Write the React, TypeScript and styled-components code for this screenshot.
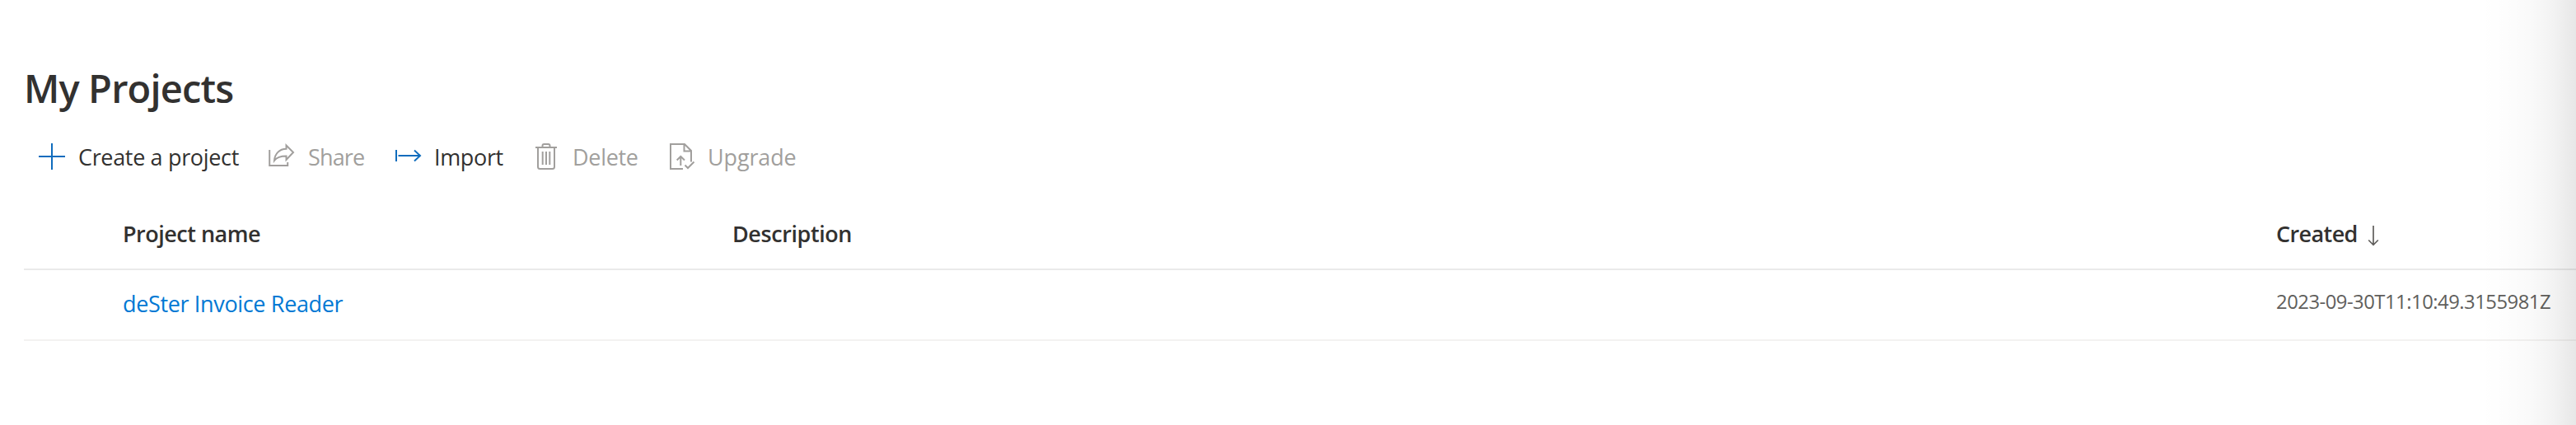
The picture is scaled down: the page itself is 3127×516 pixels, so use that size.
import React from 'react';
import styled, { createGlobalStyle } from 'styled-components';

const GlobalStyle = createGlobalStyle`
  body {
    margin: 0;
    background: #fff;
    font-family: 'Open Sans', 'Noto Sans', sans-serif;
    color: #323130;
  }
`;

const Page = styled.main`
  position: relative;
  box-sizing: border-box;
  height: 516px;
  padding: 75px 0 0 29px;
  overflow: hidden;
`;

const Title = styled.h1`
  margin: 0;
  font-size: 47px;
  font-weight: 600;
  line-height: 64px;
  letter-spacing: -0.85px;
`;

const Toolbar = styled.div`
  display: grid;
  grid-template-columns: 279px 153px 168px 164px 200px;
  height: 60px;
  margin-top: 21px;
  padding-left: 18px;
`;

const Command = styled.button<{ $spacing: number }>`
  display: flex;
  align-items: center;
  gap: 16px;
  padding: 0;
  border: 0;
  background: none;
  font: inherit;
  font-size: 27px;
  letter-spacing: ${(p) => p.$spacing}px;
  white-space: nowrap;
  color: #323130;
  &:disabled {
    color: #a19f9d;
  }
`;

const Icon = styled.svg`
  flex: none;
  width: 32px;
  height: 32px;
  overflow: visible;
  fill: none;
  stroke: #0f6cbd;
  stroke-width: 2;
  ${Command}:disabled & {
    stroke: #a19f9d;
  }
`;

const Row = styled.div<{ $height: number; $line: string }>`
  display: grid;
  grid-template-columns: 740px 1874px 1fr;
  align-items: center;
  box-sizing: border-box;
  height: ${(p) => p.$height}px;
  padding-left: 120px;
  border-bottom: 2px solid ${(p) => p.$line};
  white-space: nowrap;
`;

const HeaderCell = styled.div<{ $spacing: number }>`
  display: flex;
  align-items: center;
  gap: 12px;
  padding-top: 21px;
  font-size: 27px;
  font-weight: 600;
  line-height: 38px;
  letter-spacing: ${(p) => p.$spacing}px;
`;

const SortArrow = styled.svg`
  width: 14px;
  height: 30px;
  fill: none;
  stroke: #605e5c;
  stroke-width: 1.7;
`;

const ProjectLink = styled.a`
  padding-bottom: 3px;
  font-size: 27px;
  line-height: 38px;
  letter-spacing: -0.35px;
  color: #0078d4;
`;

const Created = styled.div`
  padding-bottom: 8px;
  font-size: 23.8px;
  line-height: 34px;
  letter-spacing: -0.48px;
  color: #605e5c;
`;

const EdgeShadow = styled.div`
  position: absolute;
  top: 0;
  right: 0;
  width: 116px;
  height: 100%;
  background: linear-gradient(
    to right,
    transparent,
    rgba(0, 0, 0, 0.006) 25%,
    rgba(0, 0, 0, 0.02) 50%,
    rgba(0, 0, 0, 0.05) 77%,
    rgba(0, 0, 0, 0.093)
  );
  pointer-events: none;
`;

export default function App() {
  return (
    <Page>
      <GlobalStyle />
      <Title>My Projects</Title>
      <Toolbar>
        <Command $spacing={-0.34}>
          <Icon>
            <path d="M16 0V32M0 16H32" />
          </Icon>
          Create a project
        </Command>
        <Command $spacing={-0.85} disabled>
          <Icon>
            <path d="M1.2 8V27H23.2V23" />
            <path d="M21.5 2.5L30 11L21.5 20V15.5C15 15.5 10 17 7 21C7.5 13 13 6.8 21.5 6.8Z" />
          </Icon>
          Share
        </Command>
        <Command $spacing={-0.35}>
          <Icon>
            <path d="M2 8V22M4.5 15H31M24 8.5L31 15L24 21.5" />
          </Icon>
          Import
        </Command>
        <Command $spacing={-0.3} disabled>
          <Icon>
            <path d="M3 5H29M11.5 5V3Q11.5 1 13.5 1H18.5Q20.5 1 20.5 3V5" />
            <path d="M6 5V28.5Q6 31 8.5 31H23.5Q26 31 26 28.5V5M11.7 10V26M16 10V26M20.3 10V26" />
          </Icon>
          Delete
        </Command>
        <Command $spacing={-0.15} disabled>
          <Icon>
            <path d="M18 31H3V1H20L28 9V22.5M19.5 1V9.5H28" />
            <path d="M15.3 27V16M10.7 20.5L15.3 15.8L20 20.5M20.5 26.5L24 30L31.5 22.5" />
          </Icon>
          Upgrade
        </Command>
      </Toolbar>
      <Row $height={108} $line="#eaeaea">
        <HeaderCell $spacing={-0.5}>Project name</HeaderCell>
        <HeaderCell $spacing={-0.42}>Description</HeaderCell>
        <HeaderCell $spacing={-0.6}>
          Created
          <SortArrow>
            <path d="M7 5V28M1.2 22.5L7 28.3L12.8 22.5" />
          </SortArrow>
        </HeaderCell>
      </Row>
      <Row $height={86} $line="#f3f2f1">
        <ProjectLink>deSter Invoice Reader</ProjectLink>
        <div />
        <Created>2023-09-30T11:10:49.3155981Z</Created>
      </Row>
      <EdgeShadow />
    </Page>
  );
}
